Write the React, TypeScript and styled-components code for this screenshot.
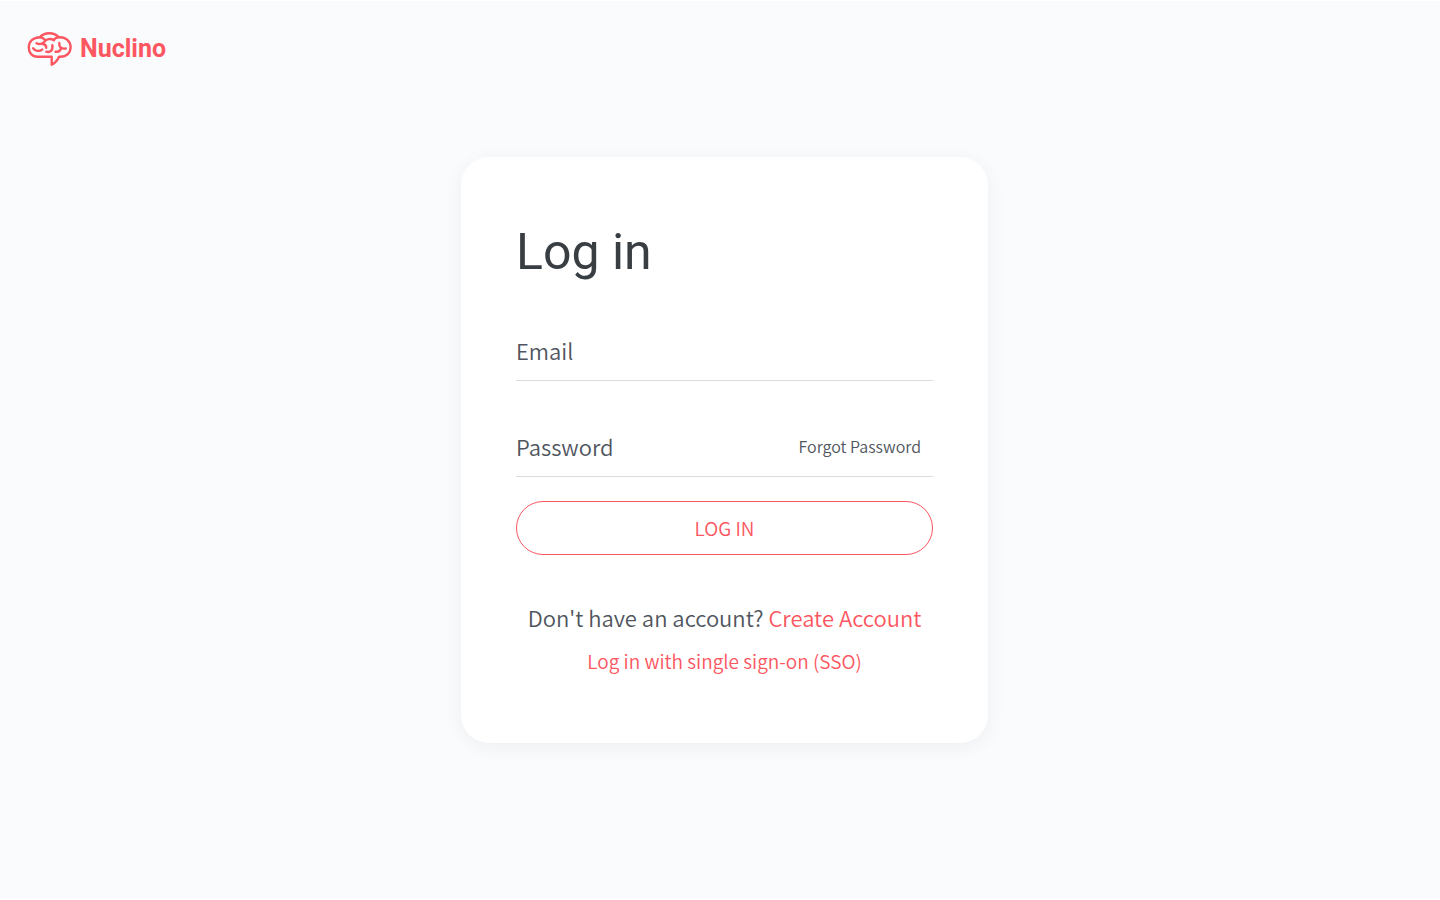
import React from "react";
import styled, { createGlobalStyle } from "styled-components";

const sans = `"Noto Sans CJK SC", "Noto Sans", sans-serif`;
const coral = "#fc5661";

const GlobalStyle = createGlobalStyle`
  *, *::before, *::after { box-sizing: border-box; }
  body {
    margin: 0;
    background: #fafbfd;
    color: #50565e;
    font-family: ${sans};
    font-weight: 350;
  }
`;

const Page = styled.div`
  display: flex;
  flex-direction: column;
  min-height: 100vh;
  border-top: 1px solid #ffffff;
  border-bottom: 2px solid #ffffff;
`;

const Header = styled.header`
  display: flex;
  padding: 30px 27px 0;
`;

const Brand = styled.a`
  display: flex;
  align-items: center;
  gap: 7px;
  height: 36px;
  color: ${coral};
  font-family: Roboto, sans-serif;
  font-size: 25px;
  font-weight: 700;
  line-height: 36px;
  text-decoration: none;
`;

const Main = styled.main`
  display: flex;
  justify-content: center;
  padding: 90px 0 40px 9px;
`;

const Card = styled.form`
  display: flex;
  flex-direction: column;
  width: 100%;
  max-width: 527px;
  padding: 65px 55px 67px;
  border-radius: 28px;
  background: #ffffff;
  box-shadow: 0 4px 20px rgba(20, 25, 30, 0.05);
`;

const Title = styled.h1`
  margin: 0 0 39px;
  color: #393e43;
  font-family: Roboto, sans-serif;
  font-size: 50px;
  font-weight: 450;
  line-height: 60px;
`;

const Fields = styled.div`
  display: flex;
  flex-direction: column;
  gap: 36px;
  margin-bottom: 24px;
`;

const Field = styled.div`
  display: flex;
  align-items: center;
  height: 60px;
  padding-bottom: 2px;
  border-bottom: 1px solid #dcdcdc;
`;

const Label = styled.label`
  font-size: 22px;
  line-height: 32px;
`;

const Input = styled.input`
  flex: 1;
  min-width: 0;
  height: 40px;
  padding: 0 12px;
  border: 0;
  outline: 0;
  background: transparent;
  color: inherit;
  font-family: inherit;
  font-size: 22px;
`;

const ForgotLink = styled.a`
  padding-right: 12px;
  color: inherit;
  font-size: 16px;
  line-height: 32px;
  text-decoration: none;
`;

const SubmitButton = styled.button`
  height: 54px;
  padding: 0 0 2px;
  border: 1px solid ${coral};
  border-radius: 27px;
  background: transparent;
  color: ${coral};
  font-family: inherit;
  font-size: 19px;
  font-weight: inherit;
`;

const SignUp = styled.p`
  margin: 46px 0 0;
  font-size: 22px;
  line-height: 32px;
  text-align: center;
`;

const AccentLink = styled.a`
  color: ${coral};
  text-decoration: none;
`;

const SingleSignOn = styled.p`
  margin: 13px 0 0;
  font-size: 19px;
  line-height: 30px;
  text-align: center;
`;

function BrainLogo() {
  return (
    <svg width="46" height="36" viewBox="0 0 46 36" fill="none" stroke="currentColor" strokeWidth="2.4" strokeLinecap="round" strokeLinejoin="round" aria-hidden="true">
      <path d="M10.500 25.800C5 25.800 1.800 21.500 1.800 16.500C1.800 10.500 6 6.500 13 6.300C15 3.500 18.500 2.200 22.300 2.200C26.500 2.200 29.700 3.700 31.700 6.300C39 5.800 43.600 10.500 43.600 16.300C43.600 21.800 39.500 25.800 33.500 25.800H32C30.700 29 28.200 32 24.700 33.800V25.800Z" />
      <path d="M13 6.300C14.800 6.300 16.300 7 17.500 8.500" />
      <path d="M31.700 6.300C29.800 6.300 28.300 7 27 8.600" />
      <path d="M27 9.300C23.500 7 19 8 17.500 10.700C16 13 12.500 13.800 9.500 12.200" />
      <path d="M15.700 13C18 13.200 19.300 14.800 19.200 16.700" />
      <path d="M6.200 17.300C8 20.200 12.500 20.700 15.200 18.600" />
      <path d="M19.300 20.700C23 21.700 26.300 19.500 25.300 14.200" />
      <path d="M32.300 12C31.800 15.500 34 18.200 38.800 17.500" />
      <path d="M34 17.500C33.300 20 31.500 21.200 28.500 20.700" />
    </svg>
  );
}

export default function App() {
  return (
    <Page>
      <GlobalStyle />
      <Header>
        <Brand href="#"><BrainLogo />Nuclino</Brand>
      </Header>
      <Main>
        <Card onSubmit={(event) => event.preventDefault()}>
          <Title>Log in</Title>
          <Fields>
            <Field>
              <Label htmlFor="email">Email</Label>
              <Input id="email" type="email" autoComplete="email" />
            </Field>
            <Field>
              <Label htmlFor="password">Password</Label>
              <Input id="password" type="password" autoComplete="current-password" />
              <ForgotLink href="#forgot">Forgot Password</ForgotLink>
            </Field>
          </Fields>
          <SubmitButton type="submit">LOG IN</SubmitButton>
          <SignUp>
            Don't have an account? <AccentLink href="#signup">Create Account</AccentLink>
          </SignUp>
          <SingleSignOn>
            <AccentLink href="#sso">Log in with single sign-on (SSO)</AccentLink>
          </SingleSignOn>
        </Card>
      </Main>
    </Page>
  );
}
